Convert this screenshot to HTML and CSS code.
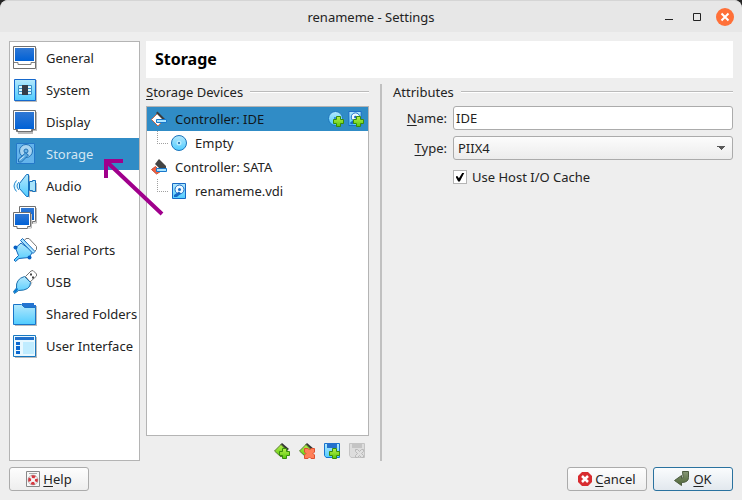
FILE: index.html
```html
<!DOCTYPE html>
<html lang="en">
<head>
<meta charset="utf-8">
<title>renameme - Settings</title>
<link rel="stylesheet" href="styles.css">
</head>
<body>
<svg class="defs" aria-hidden="true">
  <defs>
    <linearGradient id="screen" x1="0" y1="0" x2="0" y2="1"><stop offset="0" stop-color="#3078d4"/><stop offset="1" stop-color="#0061d6"/></linearGradient>
    <linearGradient id="sky" x1="0" y1="0" x2="0" y2="1"><stop offset="0" stop-color="#b4e8fc"/><stop offset="1" stop-color="#50ccff"/></linearGradient>
    <linearGradient id="green" x1="0" y1="0" x2="0" y2="1"><stop offset="0" stop-color="#b8f04c"/><stop offset="1" stop-color="#58c80c"/></linearGradient>
    <linearGradient id="olive" x1="0" y1="0" x2="0" y2="1"><stop offset="0" stop-color="#889878"/><stop offset="1" stop-color="#4c6434"/></linearGradient>
    <symbol id="plus" viewBox="0 0 11 11"><path d="M3.500.5h4v3h3v4h-3v3h-4v-3h-3v-4h3z" fill="url(#green)" stroke="#388c0c"/></symbol>
    <symbol id="cross" viewBox="0 0 11 11"><path d="M.5.5h3.500l1.500 1.500L7 .5h3.500V4L9 5.500 10.500 7v3.500H7L5.500 9 4 10.500H.5V7L2 5.500.5 4z" fill="#ff8058" stroke="#dc5030"/></symbol>
    <symbol id="disk" viewBox="0 0 14 16"><path d="M.5.5h13v15H.5z" fill="url(#sky)" stroke="#1768c4"/><circle cx="7.500" cy="6.500" r="4.500" fill="#eefaff" stroke="#1768c4"/><circle cx="7.500" cy="6.500" r="1.500" fill="#1768c4"/><path d="M7 8.500L2 12v2h3l4-3.500z" fill="#1768c4"/></symbol>
  </defs>
</svg>

<header class="titlebar">
  <h1>renameme - Settings</h1>
  <div class="window-buttons">
    <button type="button" aria-label="Minimize"><svg width="18" height="18"><path d="M5 11.500h8" stroke="#222"/></svg></button>
    <button type="button" aria-label="Maximize"><svg width="18" height="18"><path d="M5.500 5.500h7v7h-7z" fill="none" stroke="#222"/></svg></button>
    <button type="button" aria-label="Close"><svg width="18" height="18"><circle cx="9" cy="9" r="9" fill="#ff7038"/><path d="M5.500 5.500l7 7m0-7l-7 7" stroke="#fff" stroke-width="2"/></svg></button>
  </div>
</header>

<main class="workspace">
  <nav class="sidebar" aria-label="Categories">
    <a href="#general"><svg width="24" height="24"><path d="M1.500 2.500h22V24" fill="none" stroke="#bbb"/><path d="M.5.5h22v22h-22z" fill="#fff" stroke="#707070"/><path d="M2 2h19v13H2z" fill="url(#screen)"/><path d="M1 16.500h4v2h13v-2h4" fill="none" stroke="#808080"/></svg>General</a>
    <a href="#system"><svg width="24" height="24"><path d="M2 2h22v22H2z" fill="#bbb"/><path d="M1.500 1.500h21v21h-21z" fill="url(#sky)" stroke="#1668cc"/><g fill="#d8f6ff" stroke="#3a90c8"><path d="M5.500 7.500h13v3h-13zM5.500 10.500h13v3h-13zM5.500 13.500h13v3h-13z"/></g><path d="M9 7h6v10H9z" fill="#343c48"/></svg>System</a>
    <a href="#display"><svg width="24" height="24"><path d="M2 2h22v19H20v3H5" fill="#bbb"/><path d="M3.500 19v2.500h16V19" fill="#fff" stroke="#707070"/><path d="M.5.5h22v19h-4v2h-14v-2h-4z" fill="#fff" stroke="#707070"/><path d="M2 2h19v17H2z" fill="url(#screen)"/></svg>Display</a>
    <a href="#storage" class="selected" aria-current="page"><svg width="24" height="24"><path d="M3.500 1.500h18v20h-18z" fill="#64b4ec" stroke="#2478c8"/><circle cx="13" cy="9" r="6.500" fill="#a8d4f0" stroke="#2070b4"/><circle cx="13" cy="9" r="2" fill="#70b8e8" stroke="#2070b4"/><path d="M5.500 17l7-6 3 2-7 7h-3z" fill="#58a8e0" stroke="#2070b4"/><path d="M6.500 18l5-4" stroke="#d0e8f8"/></svg>Storage</a>
    <a href="#audio"><svg width="24" height="24"><path d="M3.500 6.500Q-1.500 12 3.500 17.500M6 8q-4 4 0 8" fill="#d8f4ff" stroke="#248ad0"/><path d="M9 10l8-9v23l-8-8zM17 9h7v9h-7z" fill="#bbb"/><path d="M16.500 7.500h3v-1h3v11h-3v-1h-3z" fill="#a8e4fc" stroke="#1670bc"/><path d="M6.500 9.500l7-9h2v22h-2l-7-8z" fill="url(#sky)" stroke="#1670bc"/></svg>Audio</a>
    <a href="#network"><svg width="24" height="24"><path d="M6.500.5h16v15h-3v2h-10v-2h-3z" fill="#fff" stroke="#707070"/><path d="M8 2h13v12H8z" fill="url(#screen)"/><path d="M23.500 2v15h-4" fill="none" stroke="#bbb"/><path d="M.5 6.500h17v14h-3v2H4v-2H.5z" fill="#fff" stroke="#707070"/><path d="M2 8h14v11H2z" fill="url(#screen)"/><path d="M18.500 8v14h-4" fill="none" stroke="#bbb"/></svg>Network</a>
    <a href="#serial"><svg width="24" height="24"><path d="M11 3l2-2.500h3l7.500 8v3L21 14z" fill="#fff" stroke="#777"/><path d="M8 5L2.500 10l3 7.500L1 22l1.500 1.500L6 20.500l10-1 4-6z" fill="url(#sky)" stroke="#1468bc"/><path d="M7.500 2.500l2-2L22 13.500l-2 2z" fill="#a8e4ff" stroke="#1468bc"/><circle cx="2.500" cy="9.500" r="2" fill="#0660c4"/><circle cx="16.500" cy="19.500" r="2" fill="#0660c4"/></svg>Serial Ports</a>
    <a href="#usb"><svg width="24" height="24"><path d="M12.500 6.500L18 1l2-.5L23.500 4v2L17 12z" fill="#fff" stroke="#777"/><path d="M17 4.500h2m0 3h2" stroke="#444" stroke-width="2"/><path d="M3 22q4-3 8-3 6-1 8-7" fill="none" stroke="#bbb"/><path d="M11.500 6.500l6 6q0 4-3 6-3 2-9 2L1.500 23.500l-1-2L3.500 18q-1-9 8-11.500z" fill="url(#sky)" stroke="#2070ac"/><path d="M4.500 18.500l-3 4" stroke="#0878d4" stroke-width="2"/></svg>USB</a>
    <a href="#folders"><svg width="24" height="24"><path d="M2 4h22v20H2z" fill="#bbb"/><path d="M9 3V1h12v2h2v4H9z" fill="#2474d0"/><path d="M.5 2.500h8l3 3h11v17H.5z" fill="url(#sky)" stroke="#1874c8"/></svg>Shared Folders</a>
    <a href="#interface"><svg width="24" height="24"><path d="M2 3h22v21H2z" fill="#bbb"/><path d="M.5 1.500h22v21H.5z" fill="#e8f8ff" stroke="#1878c0"/><path d="M2 3h19v3H2z" fill="#2070cc"/><path d="M3 8h4v3H3zm0 4h4v4H3zm0 5h4v3H3z" fill="#0867d0"/><path d="M10 8h11v12H10z" fill="#c0ecff"/></svg>User Interface</a>
  </nav>

  <div class="content">
    <h2 class="page-title">Storage</h2>
    <div class="panes">
      <section class="devices">
        <h3 class="group-title"><span><u>S</u>torage Devices</span></h3>
        <ul class="tree">
          <li class="controller active"><svg width="16" height="16"><path d="M.5 8.500L7 2l6 6.500L7 15z" fill="#fff" stroke="#c86848"/><path d="M6.500.5L14 8l-2 1-7-7z" fill="#3c3c3c"/><path d="M5.500 8.500h10v3h-10z" fill="#a8e4ff" stroke="#1878cc"/></svg><span>Controller: IDE</span>
            <span class="row-actions">
              <button type="button" aria-label="Add optical drive"><svg width="16" height="16"><circle cx="7.500" cy="7.500" r="7" fill="url(#sky)" stroke="#1c74bc"/><circle cx="7" cy="7" r="1" fill="#1878cc"/><use href="#plus" x="5" y="5" width="11" height="11"/></svg></button>
              <button type="button" aria-label="Add hard disk"><svg width="16" height="16"><use href="#disk" width="14" height="15"/><use href="#plus" x="5" y="5" width="11" height="11"/></svg></button>
            </span></li>
          <li class="device"><svg width="16" height="16"><circle cx="8" cy="8" r="7.500" fill="url(#sky)" stroke="#1c74bc"/><circle cx="8" cy="8" r="2.500" fill="#b8ecff"/><circle cx="8" cy="8" r="1" fill="#1060a8"/></svg><span>Empty</span></li>
          <li class="controller"><svg width="16" height="16"><path d="M.5 10.500l4-3 5 5L5.500 15z" fill="#f06040" stroke="#c85038"/><path d="M4 5l4-5 7 7v3H9z" fill="#444"/><path d="M5.500 9.500h10v3h-10z" fill="#a8e4ff" stroke="#1878cc"/></svg><span>Controller: SATA</span></li>
          <li class="device"><svg width="16" height="16"><use href="#disk" x="1" width="14" height="16"/></svg><span>renameme.vdi</span></li>
        </ul>
        <div class="toolbar">
          <button type="button" aria-label="Add controller"><svg width="16" height="16"><path d="M8 0l7 6-3 2-6-6z" fill="#333"/><path d="M.5 8L7 1.500 13.500 8 7 14z" fill="url(#green)" stroke="#5c7c38"/><use href="#plus" x="5" y="5" width="11" height="11"/></svg></button>
          <button type="button" aria-label="Remove controller"><svg width="16" height="16"><path d="M8 0l7 6-3 2-6-6z" fill="#333"/><path d="M.5 8L7 1.500 13.500 8 7 14z" fill="url(#green)" stroke="#5c7c38"/><use href="#cross" x="5" y="5" width="11" height="11"/></svg></button>
          <button type="button" aria-label="Add attachment"><svg width="16" height="16"><path d="M.5.5h15v14H2l-1.500-2z" fill="url(#sky)" stroke="#1874d0"/><path d="M3 0h10v5H3z" fill="#2470cc"/><use href="#plus" x="5" y="5" width="11" height="11"/></svg></button>
          <button type="button" aria-label="Remove attachment" disabled><svg width="16" height="16"><path d="M.5.5h15v14H2l-1.500-2z" fill="#ddd" stroke="#c4c4c4"/><path d="M3 0h10v5H3z" fill="#c4c4c4"/><path d="M6.500 6.500h2l2 2 2-2h2v2l-2 2 2 2v2h-2l-2-2-2 2h-2v-2l2-2-2-2z" fill="#e0e0e0" stroke="#b8b8b8"/></svg></button>
        </div>
      </section>
      <section class="attributes">
        <h3 class="group-title"><span>Attributes</span></h3>
        <form class="fields">
          <label for="name"><span><u>N</u>ame:</span></label>
          <input id="name" type="text" value="IDE">
          <label for="type"><span><u>T</u>ype:</span></label>
          <select id="type"><option>PIIX4</option></select>
          <div class="check"><input id="cache" type="checkbox" checked><label for="cache">Use Host I/O Cache</label></div>
        </form>
      </section>
    </div>
  </div>
</main>

<footer class="footer">
  <button type="button" class="push help"><svg width="14" height="16"><path d="M.5.5h13v15H.5z" fill="#f8f8f8" stroke="#888"/><path d="M3 2.500h8" stroke="#aaa"/><circle cx="7" cy="9" r="3.500" fill="none" stroke="#eee" stroke-width="3"/><circle cx="7" cy="9" r="3.500" fill="none" stroke="#d83840" stroke-width="3" stroke-dasharray="3.500 2" stroke-dashoffset="1.750"/><circle cx="7" cy="9" r="5" fill="none" stroke="#999" stroke-width=".5"/></svg><span><u>H</u>elp</span></button>
  <button type="button" class="push"><svg width="14" height="14"><path d="M4 0h6l4 4v6l-4 4H4l-4-4V4z" fill="#d82c30"/><path d="M4 4l6 6m0-6l-6 6" stroke="#fff" stroke-width="2.500"/></svg><span><u>C</u>ancel</span></button>
  <button type="button" class="push default"><svg width="16" height="16"><path d="M8.500.5h6v6q0 5-7 5v3L.5 9.500l7-5v3q2 0 1.500-2z" fill="url(#olive)" stroke="#4c5c40"/></svg><span><u>O</u>K</span></button>
</footer>

<svg class="pointer-arrow" width="64" height="62" aria-hidden="true"><path d="M60 57L5 5M4 21V4h17" fill="none" stroke="#a0008c" stroke-width="4"/></svg>
</body>
</html>
```
FILE: styles.css
```css
* { box-sizing: border-box; }

html { background: #262626; }

body {
  margin: 0;
  min-height: 100vh;
  display: flex;
  flex-direction: column;
  position: relative;
  background: #eee;
  border-radius: 8px 8px 0 0;
  color: #232323;
  font: 13px/18px "Noto Sans", sans-serif;
}

h1, h2, h3, ul { margin: 0; padding: 0; }
button, input, select { font: inherit; color: inherit; }
svg { display: block; flex: none; }
u { text-underline-offset: 2px; }
.defs { position: absolute; width: 0; height: 0; }

.titlebar {
  display: flex;
  justify-content: center;
  align-items: center;
  height: 32px;
  position: relative;
  background: #e7e7e7;
  border-top: 1px solid #d5d5d5;
  border-radius: 8px 8px 0 0;
}
.titlebar h1 { font-size: 13px; font-weight: 400; }
.window-buttons { position: absolute; right: 8px; display: flex; gap: 10px; }
.window-buttons button,
.toolbar button,
.row-actions button { padding: 0; border: 0; background: none; }

.workspace {
  flex: 1;
  display: flex;
  gap: 6px;
  padding: 9px 9px 6px;
}

.sidebar {
  width: 131px;
  flex: none;
  background: #fff;
  border: 1px solid #b4b4b4;
}
.sidebar a {
  display: flex;
  align-items: center;
  gap: 9px;
  height: 32px;
  padding-left: 3px;
  color: inherit;
  text-decoration: none;
  white-space: nowrap;
}
.sidebar .selected { background: #308cc6; color: #d3e6f2; }

.content { flex: 1; display: flex; flex-direction: column; gap: 6px; }
.page-title {
  height: 37px;
  padding-left: 9px;
  background: #fff;
  color: #000;
  font-size: 16px;
  line-height: 36px;
}

.panes { flex: 1; display: flex; gap: 11px; }
.devices { width: 223px; flex: none; display: flex; flex-direction: column; }
.attributes { flex: 1; border-left: 2px solid #c0c0c0; padding-left: 11px; }

.group-title {
  display: flex;
  align-items: center;
  gap: 7px;
  height: 16px;
  margin-bottom: 6px;
  font-size: 13px;
  font-weight: 400;
}
.group-title::after {
  content: "";
  flex: 1;
  border-top: 1px solid #bbb;
  border-bottom: 1px solid #fff;
}

.tree {
  flex: 1;
  list-style: none;
  background: #fff;
  border: 1px solid #b4b4b4;
}
.tree li { display: flex; align-items: center; gap: 8px; height: 24px; padding: 0 4px; }
.tree .active { background: #308cc6; color: #101820; }
.row-actions { display: flex; gap: 4px; margin-left: auto; }
.tree .device { padding-left: 10px; }
.tree .device::before {
  content: "";
  width: 10px;
  height: 12px;
  margin-right: -5px;
  align-self: flex-start;
  border: dotted #a0a0a0;
  border-width: 0 0 1px 1px;
}

.toolbar {
  display: flex;
  justify-content: flex-end;
  gap: 9px;
  height: 25px;
  padding: 5px 4px 0 0;
}

.fields {
  display: grid;
  grid-template-columns: 54px 1fr;
  gap: 6px;
  align-items: center;
}
.fields > label { text-align: right; }
.fields input[type="text"],
.fields select {
  width: 100%;
  height: 24px;
  border: 1px solid #ababab;
  border-radius: 3px;
  background: #fff;
  padding: 0 2px;
}
.fields select {
  appearance: none;
  padding-left: 4px;
  background:
    conic-gradient(from 315deg at 50% 100%, #585858 90deg, transparent 0) right 7px center / 8px 4px no-repeat,
    linear-gradient(#fcfcfc, #ececec);
}
.check { grid-column: 2; display: flex; align-items: center; gap: 5px; height: 22px; }
.check input {
  appearance: none;
  width: 14px;
  height: 14px;
  margin: 0;
  border: 1px solid #b4b4b4;
  background: #fff;
  display: grid;
  place-items: center;
}
.check input:checked::before {
  content: "";
  width: 9px;
  height: 9px;
  background: #000;
  clip-path: polygon(0 45%, 20% 40%, 38% 65%, 78% 0, 100% 0, 48% 100%, 30% 100%);
}

.footer { display: flex; gap: 6px; padding: 0 9px 9px; }
.push {
  display: flex;
  justify-content: center;
  align-items: center;
  gap: 3px;
  width: 80px;
  height: 24px;
  padding: 0;
  border: 1px solid #ababab;
  border-radius: 3px;
  background: linear-gradient(#fdfdfd, #eee);
}
.push.help { margin-right: auto; }
.push.default { border-color: #2a729f; background: linear-gradient(#fafcfd, #e2e8ee); }

.pointer-arrow { position: absolute; left: 102px; top: 157px; }
```
